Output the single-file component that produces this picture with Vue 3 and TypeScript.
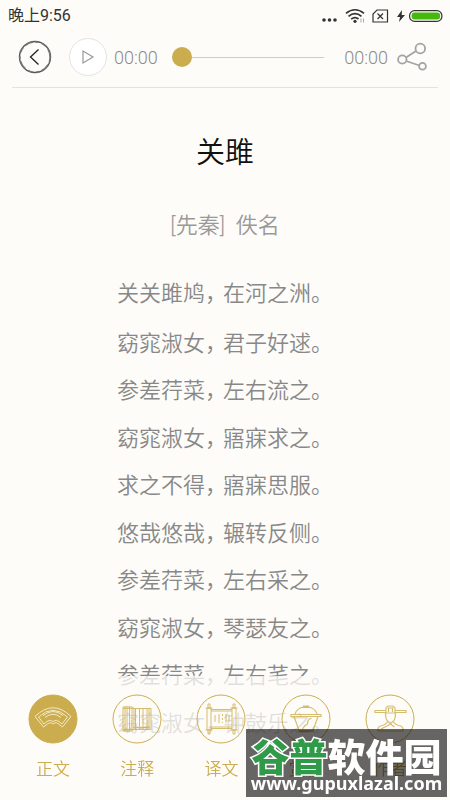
<script setup lang="ts">
import { ref } from 'vue'

interface Tab {
  id: string
  label: string
}

const tabs: Tab[] = [
  { id: 'text', label: '正文' },
  { id: 'notes', label: '注释' },
  { id: 'translation', label: '译文' },
  { id: 'review', label: '赏析' },
  { id: 'author', label: '作者' },
]

const opening: [string, string] = ['关关雎鸠', '在河之洲']

const couplets: [string, string][][] = [
  [['窈窕淑女', '君子好逑'], ['参差荇菜', '左右流之']],
  [['窈窕淑女', '寤寐求之'], ['求之不得', '寤寐思服']],
  [['悠哉悠哉', '辗转反侧'], ['参差荇菜', '左右采之']],
  [['窈窕淑女', '琴瑟友之'], ['参差荇菜', '左右芼之']],
  [['窈窕淑女', '钟鼓乐之']],
]

const active = ref('text')
const position = ref(0)
</script>

<template>
  <div class="page">
    <div class="status">
      <span class="clock">晚上9:56</span>
      <div class="indicators">
        <svg class="dots" width="16" height="16" viewBox="0 0 16 16" fill="#333">
          <circle cx="3" cy="12" r="1.8" /><circle cx="8.500" cy="12" r="1.8" /><circle cx="14" cy="12" r="1.8" />
        </svg>
        <svg class="wifi" width="20" height="16" viewBox="0 0 20 16" fill="none" stroke="#333" stroke-width="1.7">
          <path d="M1 5.300Q10-1.800 19 5.300M3.500 8.300Q10 3 16.500 8.300M6.200 11.200Q10 8 13.500 11" />
          <circle cx="10" cy="13.300" r="1.6" fill="#333" stroke="none" />
          <path d="M16 10.500v4M18.500 10.500v4" stroke="#aaa" stroke-width="1" />
        </svg>
        <svg class="sim" width="17" height="14" viewBox="0 0 17 14" fill="none" stroke="#333" stroke-width="1.2">
          <path d="M5 1h10.500v12H1V5z" /><path d="M5.500 4.500l5.500 5.500M11 4.500L5.500 10" />
        </svg>
        <svg class="bolt" width="8" height="12" viewBox="0 0 8 12" fill="#333"><path d="M5 0L0 7h3L2 12l6-7H4.700z" /></svg>
        <svg class="battery" width="34" height="12" viewBox="0 0 34 12">
          <rect x=".6" y=".6" width="32.300" height="10.800" rx="5" fill="#fff" stroke="#333" stroke-width="1.2" />
          <rect x="2.600" y="2.500" width="28.500" height="7" rx="3" fill="#45b80b" />
        </svg>
      </div>
    </div>

    <header class="player">
      <button class="back" type="button" aria-label="返回">
        <svg width="34" height="34" viewBox="0 0 34 34" fill="none">
          <circle cx="17" cy="17" r="15.500" stroke="#555" stroke-width="1.4" />
          <circle cx="17" cy="17" r="15.100" stroke="#777" stroke-width="1.500" stroke-dasharray="5 3 9 2 3 4" />
          <path d="M20.500 9.500L12.500 17l8 7.500" stroke="#222" stroke-width="1.3" />
        </svg>
      </button>
      <button class="play" type="button" aria-label="播放">
        <svg width="14" height="16" viewBox="0 0 14 16" fill="none" stroke="#999" stroke-width="1.2"><path d="M2 2v12l10-6z" /></svg>
      </button>
      <span class="time">00:00</span>
      <input v-model.number="position" class="seek" type="range" min="0" max="100" aria-label="播放进度" />
      <span class="time">00:00</span>
      <button class="share" type="button" aria-label="分享">
        <svg width="30" height="30" viewBox="0 0 30 30" fill="none" stroke="#a3a3a3" stroke-width="1.8">
          <path d="M9 15.500L19 9M9 19l13.500 4.500" />
          <circle cx="5.300" cy="17.500" r="4.200" /><circle cx="23.300" cy="6.500" r="4.800" /><circle cx="25.500" cy="24.300" r="3.400" />
        </svg>
      </button>
    </header>

    <main class="poem">
      <h1>关雎</h1>
      <p class="author">[先秦]&nbsp; 佚名</p>
      <p class="line opening">{{ opening[0] }}<span class="comma">，</span>{{ opening[1] }}。</p>
      <div class="verses">
        <div v-for="(couplet, i) in couplets" :key="i">
          <p v-for="line in couplet" :key="line[1]" class="line">{{ line[0] }}<span class="comma">，</span>{{ line[1] }}。</p>
        </div>
      </div>
    </main>

    <nav class="tabs">
      <button v-for="tab in tabs" :key="tab.id" type="button" class="tab" :class="{ active: active === tab.id }" @click="active = tab.id">
        <svg class="medal" width="50" height="50" viewBox="0 0 50 50" fill="none" stroke="currentColor">
          <circle class="ring" cx="25" cy="25" r="24" />
          <g v-if="tab.id === 'text'" stroke-width="1">
            <path d="M7 22.500Q25 5 43 22.500L34.500 33l-4-3q-2-2-4-1l-1.500 1-1.500-1q-2-1-4 1l-4 3z" />
            <path d="M10.500 23Q25 9.500 39.500 23l-5.500 7-3-2.500q-2.500-2-5-.5l-1 .5-1-.5q-2.500-1.500-5 .5l-3 2.500z" />
            <path d="M15 21.500Q25 13.500 35 21.500M17 23.500Q25 17 33 23.500" />
          </g>
          <g v-else-if="tab.id === 'notes'" stroke-width="1">
            <path d="M11 13h9v24h-9zM13 12v26M17.500 12v26M11 14.500h28v21H11M23.500 14.500v21M27.500 14.500v21M31 14.500v21M35 14.500v21M37 14.500v21M15 12v26M20 13l2 1.500v21L20 37" />
            <path d="M11 35.500h9M21 33.500h17" stroke-width="1.7" />
          </g>
          <g v-else-if="tab.id === 'translation'" stroke-width="1">
            <path d="M11 14h4v22h-4zM36 14h4v22h-4zM12 10h2v4h-2zM37 10h2v4h-2zM12 36h2v4h-2zM37 36h2v4h-2zM15 15.500h21M15 17h21M15 33h21M15 34.500h21M9.500 14h7M34.500 14h7M9.500 36h7M34.500 36h7" />
            <path d="M19 21v7M23 20v9M26.500 20v2M26.500 24v2M26.500 28v1M30 20v9M33 21v7" />
          </g>
          <g v-else-if="tab.id === 'review'" stroke-width="1.2">
            <path d="M10 20.500h30v2H10zM13 22.500l5 14h14l5-14M14 20q2-6 9-7h4q7 1 9 7M22.500 12h5v1.500h-5zM18 37.500h14M30.500 24q-4 1-4 6-3 1-5 5" />
          </g>
          <g v-else stroke-width="1.2">
            <path d="M10 16.500h11v2H10zM30 16.500h11v2H30zM21 19v-5l2-2h5l2 2v5zM23.500 18v-4h4v4M20.500 19q0 6 2 8l3 2.500 3-2.500q2-2 2-8M22.500 28q-2 3-7 4-3 1-2.500 5h25q.5-4-2.500-5-5-1-7-4M16 35l6-3 3.500-2 4 3" />
          </g>
        </svg>
        <span>{{ tab.label }}</span>
      </button>
    </nav>

    <aside class="mark">
      <div class="brand"><span class="green">谷普</span>软件园</div>
      <div class="site">www.gupuxlazal.com</div>
    </aside>
  </div>
</template>

<style>
body {
  background: #fdfcf8;
}
</style>

<style scoped>
.page {
  min-height: 100vh;
  background: #fdfcf8;
  font-family: Roboto, "Noto Sans CJK SC", sans-serif;
  font-weight: 350;
  color: #8c8c8c;
  overflow: hidden;
}
button {
  padding: 0;
  border: 0;
  background: none;
  font: inherit;
  color: inherit;
  cursor: pointer;
}
svg {
  display: block;
}
.status {
  display: flex;
  justify-content: space-between;
  align-items: center;
  height: 32px;
  padding: 0 7px 0 8px;
}
.clock {
  font-size: 16px;
  line-height: 20px;
  font-weight: 400;
  color: #333;
}
.indicators {
  display: flex;
  align-items: center;
}
.dots {
  margin-right: 8px;
}
.wifi {
  margin-right: 7px;
}
.sim {
  margin-right: 8px;
}
.bolt {
  margin-right: 4px;
}
.player {
  display: flex;
  align-items: center;
  height: 56px;
  margin: 0 12px;
  padding: 0 11px 5px 6px;
  box-sizing: border-box;
  border-bottom: 1px solid #e4e3df;
}
.play {
  display: flex;
  align-items: center;
  justify-content: center;
  width: 38px;
  height: 38px;
  margin: 0 7px 0 17px;
  flex: none;
  border: 1px solid #e4e4e4;
  border-radius: 50%;
  background: #fff;
}
.time {
  font-size: 18px;
  font-weight: 300;
}
.seek {
  flex: 1;
  min-width: 0;
  height: 20px;
  margin: 0 20px 0 14px;
  appearance: none;
  background: linear-gradient(#ccc, #ccc) center / 100% 1px no-repeat;
}
.seek::-webkit-slider-thumb {
  appearance: none;
  width: 20px;
  height: 20px;
  border-radius: 50%;
  background: #cbac4e;
}
.share {
  margin-left: 9px;
}
.poem {
  text-align: center;
}
h1 {
  margin: 45px 0 0;
  font-size: 29px;
  line-height: 40px;
  font-weight: 350;
  color: #111;
}
.author {
  margin: 36px 0 0;
  font-size: 22px;
  line-height: 34px;
  color: #999;
}
.line {
  margin: 0;
  font-size: 22px;
  line-height: 47px;
  color: #888;
}
.opening {
  margin: 27px 0 3px;
}
.comma {
  display: inline-block;
  width: 18px;
}
.verses {
  display: grid;
  gap: 1px;
}
.tabs {
  position: fixed;
  right: 0;
  bottom: 0;
  left: 0;
  display: grid;
  grid-template-columns: repeat(5, 1fr);
  height: 124px;
  padding: 18px 18px 0 11px;
  box-sizing: border-box;
  background: rgba(253, 252, 248, 0.75);
}
.tab {
  display: flex;
  flex-direction: column;
  align-items: center;
  gap: 12px;
  font-size: 17px;
  line-height: 26px;
  color: #cbac4e;
}
.ring {
  stroke-width: 1;
}
.active .ring {
  fill: #cbac4e;
}
.medal g {
  opacity: 0.8;
}
.active .medal g {
  stroke: #fff8df;
}
.mark {
  position: fixed;
  right: 3px;
  bottom: 3px;
  width: 201px;
  height: 68px;
  padding-top: 8px;
  box-sizing: border-box;
  background: rgba(0, 0, 0, 0.6);
  color: #fff;
  text-align: center;
  white-space: nowrap;
}
.brand {
  font-family: "Noto Sans CJK SC", sans-serif;
  font-size: 38px;
  line-height: 36px;
  font-weight: 900;
}
.green {
  color: #2f9a48;
  -webkit-text-stroke: 3px #fff;
  paint-order: stroke fill;
}
.site {
  font-family: "Noto Sans", sans-serif;
  font-size: 18px;
  line-height: 20px;
  font-weight: 700;
}
</style>
